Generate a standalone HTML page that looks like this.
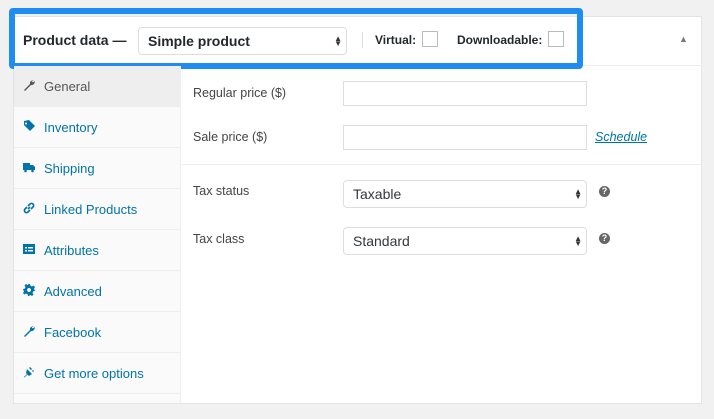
<!DOCTYPE html>
<html><head><style>
body{margin:0;width:714px;height:419px;background:#f1f1f1;font-family:"Liberation Sans",sans-serif;position:relative;overflow:hidden;color:#23282d}
.panel{position:absolute;left:13px;top:16px;width:689px;height:388px;background:#fff;border:1px solid #e2e4e7;box-sizing:border-box}
.hdr{position:absolute;left:13px;top:16px;width:689px;height:50px;border-bottom:1px solid #eee;box-sizing:border-box}
.blue{position:absolute;left:9px;top:8px;width:574px;height:61px;border:6px solid #1e8cf0;border-radius:4px;box-sizing:border-box}
.t{position:absolute;white-space:nowrap}
.side{position:absolute;left:14px;top:66px;width:166px;height:337px;background:#fafafa;border-right:1px solid #eee}
.tab{height:40px;border-bottom:1px solid #eee;position:relative;color:#0073aa;font-size:13px}
.tab span{position:absolute;left:30px;top:13px}
.tab svg{position:absolute;left:9px;top:13px;width:12px;height:12px;fill:#0073aa}
.tab.a{background:#eee;color:#555}
.tab.a svg{fill:#555}
.lbl{font-size:12.5px;color:#444}
.inp{position:absolute;background:#fff;border:1px solid #ddd;box-sizing:border-box}
.sel{position:absolute;border:1px solid #ddd;border-radius:4px;box-sizing:border-box;background:#fff;font-size:14px;color:#32373c;padding:0 9px;line-height:26px}
.arr{position:absolute;right:4px;top:8px;font-size:8px;line-height:5px;color:#333}
.q{position:absolute;width:11px;height:11px;border-radius:50%;background:#666;color:#fff;font-size:9px;font-weight:bold;text-align:center;line-height:11px}
.cb{position:absolute;width:16px;height:16px;border:1px solid #bbb;background:#fff;box-sizing:border-box}
</style></head><body>
<div class="panel"></div>
<div class="hdr"></div>
<div class="blue"></div>
<div class="t" style="left:23px;top:32px;font-size:14px;font-weight:bold">Product data —</div>
<div class="sel" style="left:138px;top:27px;width:209px;height:28px;font-size:14px;font-weight:bold;color:#23282d">Simple product<div class="arr">▲<br>▼</div></div>
<div style="position:absolute;left:362px;top:32px;width:1px;height:16px;background:#ddd"></div>
<div class="t" style="left:375px;top:33px;font-size:12px;font-weight:bold">Virtual:</div>
<div class="cb" style="left:422px;top:31px"></div>
<div class="t" style="left:457px;top:33px;font-size:12px;font-weight:bold">Downloadable:</div>
<div class="cb" style="left:548px;top:31px"></div>
<div class="t" style="left:679px;top:34px;font-size:9px;color:#777">▲</div>
<div class="side">
<div class="tab a"><svg viewBox="0 0 12 12"><path d="M11 1.5a3 3 0 0 0-4 3.5L1 11l1 1 6-6a3 3 0 0 0 3.5-4L10 3.5 8.5 2z"/></svg><span>General</span></div>
<div class="tab"><svg viewBox="0 0 12 12"><path d="M6 0l6 6-5 5-6-6V1z M3 2.5a1 1 0 1 0 .01 0z"/></svg><span>Inventory</span></div>
<div class="tab"><svg viewBox="0 0 12 12"><path d="M0 2h7v7H0z M7 4h3l2 2v3H7z"/><circle cx="2.5" cy="10" r="1.3"/><circle cx="9.5" cy="10" r="1.3"/></svg><span>Shipping</span></div>
<div class="tab"><svg viewBox="0 0 12 12" fill="none" stroke="#0073aa" stroke-width="1.6" style="fill:none"><path d="M5 7l2-2 M4 5L2 7a2 2 0 0 0 3 3l2-2 M8 7l2-2a2 2 0 0 0-3-3L5 4"/></svg><span>Linked Products</span></div>
<div class="tab"><svg viewBox="0 0 12 12"><path d="M0 1h12v10H0z M2 4v1.5h2V4z M5 4v1.5h5V4z M2 7v1.5h2V7z M5 7v1.5h5V7z" fill-rule="evenodd"/></svg><span>Attributes</span></div>
<div class="tab"><svg viewBox="0 0 12 12"><path d="M5 0h2l.4 1.8 1.6.7L10.5 1.5 12 3l-1 1.5.7 1.6L12 7 12 7l-1.8.4-.7 1.6 1 1.5-1.5 1.5-1.5-1-1.6.7L7 12H5l-.4-1.8-1.6-.7-1.5 1L0 9l1-1.5-.7-1.6L0 5.5V5l1.8-.4.7-1.6-1-1.5L3 0l1.5 1 1-.5zM6 4a2 2 0 1 0 .01 0z" fill-rule="evenodd"/></svg><span>Advanced</span></div>
<div class="tab"><svg viewBox="0 0 12 12"><path d="M11 1.5a3 3 0 0 0-4 3.5L1 11l1 1 6-6a3 3 0 0 0 3.5-4L10 3.5 8.5 2z"/></svg><span>Facebook</span></div>
<div class="tab"><svg viewBox="0 0 12 12"><path d="M4 3l5 5-3 2-3-3z M1 11l3-3 .5.5-3 3z M7 1l2 2-1 1-2-2z M10 4l1 1-1 1-1-1z"/></svg><span>Get more options</span></div>
</div>
<div class="t lbl" style="left:193px;top:86px">Regular price ($)</div>
<div class="inp" style="left:343px;top:81px;width:244px;height:25px"></div>
<div class="t lbl" style="left:193px;top:130px">Sale price ($)</div>
<div class="inp" style="left:343px;top:125px;width:244px;height:25px"></div>
<div class="t" style="left:595px;top:130px;font-size:12.5px;color:#0073aa;font-style:italic;text-decoration:underline">Schedule</div>
<div style="position:absolute;left:181px;top:164px;width:520px;height:1px;background:#eee"></div>
<div class="t lbl" style="left:193px;top:184px">Tax status</div>
<div class="sel" style="left:343px;top:180px;width:244px;height:28px">Taxable<div class="arr">▲<br>▼</div></div>
<div class="q" style="left:599px;top:186px">?</div>
<div class="t lbl" style="left:193px;top:232px">Tax class</div>
<div class="sel" style="left:343px;top:227px;width:244px;height:28px">Standard<div class="arr">▲<br>▼</div></div>
<div class="q" style="left:599px;top:233px">?</div>
</body></html>
